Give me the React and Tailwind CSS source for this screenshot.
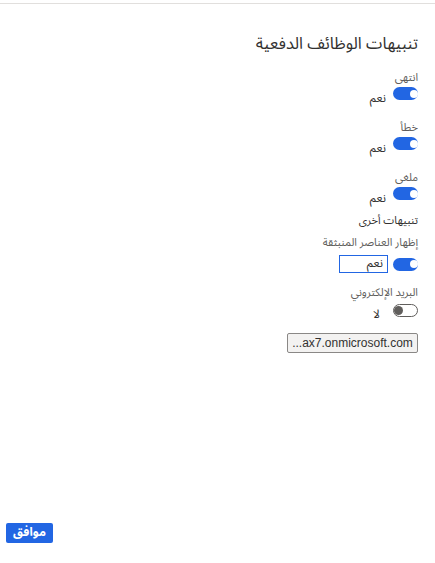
import React from 'react'

const font = { fontFamily: '"Segoe UI", "Noto Sans Arabic", "DejaVu Sans", sans-serif' }

function Toggle({ on }) {
  if (on) {
    return (
      <span className="flex items-center w-[25px] h-[13px] rounded-full bg-[#2266e3] shrink-0">
        <span className="w-[8px] h-[8px] rounded-full bg-white ml-[3px]" />
      </span>
    )
  }
  return (
    <span className="flex items-center justify-end w-[25px] h-[13px] rounded-full border border-[#605e5c] bg-white shrink-0">
      <span className="w-[9px] h-[9px] rounded-full bg-[#605e5c] mr-[1px]" />
    </span>
  )
}

function Field({ label, on = true, value }) {
  return (
    <div className="flex flex-col items-start">
      <div className="text-[11px] leading-[14px] text-[#605e5c]">{label}</div>
      <div className="flex items-start gap-[7px] mt-[2px] h-[18px]">
        <Toggle on={on} />
        <span className="text-[12px] leading-[16px] text-[#323130] mt-[4px]">{value}</span>
      </div>
    </div>
  )
}

export default function App() {
  return (
    <div dir="rtl" className="relative w-[435px] h-[563px] bg-white flex flex-col" style={font}>
      <div className="mt-[3px] h-px bg-[#e1dfdd]" />

      <div className="flex flex-col pr-[17px] pl-[16px]">
        <h1 className="mt-[28px] text-[16.5px] leading-[24px] text-[#323130] font-normal">
          تنبيهات الوظائف الدفعية
        </h1>

        <div className="mt-[15px] flex flex-col gap-[16px]">
          <Field label="انتهى" value="نعم" />
          <Field label="خطأ" value="نعم" />
          <Field label="ملغى" value="نعم" />
        </div>

        <div className="mt-[9px] text-[11px] leading-[14px] text-[#323130]">تنبيهات أخرى</div>

        <div className="mt-[8px] text-[11px] leading-[14px] text-[#605e5c]">إظهار العناصر المنبثقة</div>
        <div className="flex items-center gap-[5px] mt-[5px]">
          <Toggle on />
          <span className="flex items-center justify-start w-[49px] h-[18px] border border-[#2266e3] px-[4px] text-[12px] leading-[16px] text-[#323130]">
            نعم
          </span>
        </div>

        <div className="mt-[13px] text-[11px] leading-[14px] text-[#605e5c]">البريد الإلكتروني</div>
        <div className="flex items-start gap-[13px] mt-[4px] h-[18px]">
          <Toggle on={false} />
          <span className="text-[12px] leading-[16px] text-[#323130] mt-[3px]">لا</span>
        </div>

        <div className="mt-[11px] flex">
          <button
            dir="ltr"
            className="w-[131px] h-[20px] px-[4px] border border-[#8a8886] rounded-[2px] bg-[#f3f2f1] text-[12px] leading-[16px] text-[#323130] text-center whitespace-nowrap"
            style={{ fontFamily: '"Segoe UI", "Liberation Sans", Arial, sans-serif' }}
          >
            ...ax7.onmicrosoft.com
          </button>
        </div>
      </div>

      <div className="mt-auto mb-[20px] pl-[6px] flex justify-end">
        <button className="w-[47px] h-[20px] rounded-[2px] bg-[#2266e3] text-white text-[12px] font-bold leading-[16px]">
          موافق
        </button>
      </div>
    </div>
  )
}
